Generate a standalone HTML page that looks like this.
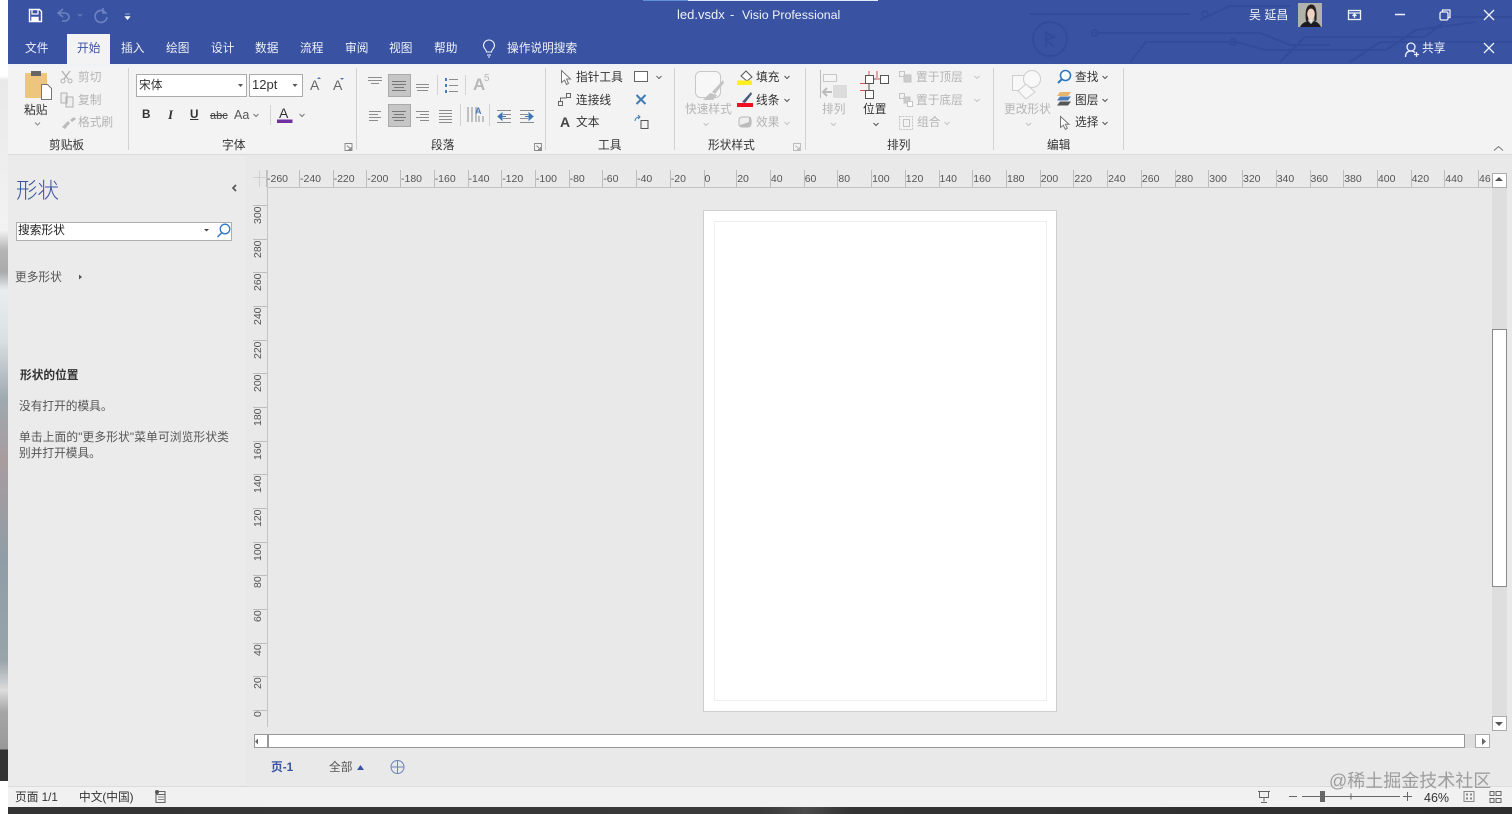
<!DOCTYPE html>
<html lang="zh"><head><meta charset="utf-8"><title>led.vsdx - Visio Professional</title>
<style>
html,body{margin:0;padding:0;width:1512px;height:814px;overflow:hidden;background:#ebebeb}
body{position:relative;font-family:"Liberation Sans","Noto Sans CJK SC",sans-serif;font-size:12px;color:#444;filter:blur(.35px)}
div,span{position:absolute}
.t{line-height:16px;white-space:nowrap;font-size:11.7px;margin-top:1px}
.w{color:#f0f2fa}.g{color:#b4b4b4}.d{color:#333}
.r{top:170px;height:17px;border-left:1px solid #bdbdbd;padding-left:0;font-size:10.5px;line-height:18px;color:#555;font-family:"Liberation Sans",sans-serif;white-space:nowrap}
.v{left:252px;width:13px;height:22px;writing-mode:vertical-rl;transform:rotate(180deg);text-align:right;font-size:10.5px;line-height:13px;color:#555;font-family:"Liberation Sans",sans-serif}
.h{left:253px;width:14px;height:1px;background:#bdbdbd}
svg{position:absolute;left:0;top:0}
</style></head><body>
<!-- left strip -->
<div style="left:0;top:0;width:8px;height:814px;background:linear-gradient(180deg,#fff 0,#fff 76px,#e9e9e9 80px,#f2f2f2 230px,#b5b5b5 250px,#aaa 272px,#e8eef0 290px,#d9e0e3 340px,#9ea9b0 400px,#a89c9e 460px,#8f9da6 560px,#98a4aa 660px,#dcdcdc 690px,#a5a5a5 712px,#999 749px,#333 750px,#333 781px,#fff 781px)"></div>
<!-- title bar -->
<div style="left:8px;top:0;width:1504px;height:64px;background:#3953a2"></div>
<div style="left:643px;top:0;width:45px;height:1px;background:#5f8fd8"></div>
<div style="left:688px;top:0;width:190px;height:1px;background:#e4e9f5"></div>
<!-- ribbon -->
<div style="left:8px;top:64px;width:1504px;height:90px;background:linear-gradient(180deg,#edf2f8 0,#f3f3f3 4px)"></div>
<div style="left:8px;top:154px;width:1504px;height:1px;background:#dcdcdc"></div>
<div style="left:67px;top:34px;width:43px;height:30px;background:#f3f3f3"></div>
<!-- canvas -->
<div style="left:8px;top:155px;width:1504px;height:632px;background:#e9e9e9"></div>
<div style="left:8px;top:155px;width:237px;height:632px;background:#ebebeb"></div>
<!-- page -->
<div style="left:703px;top:210px;width:352px;height:500px;background:#fff;border:1px solid #cfcfcf"></div>
<div style="left:714px;top:221px;width:331px;height:478px;background:#fff;border:1px solid #eeeeee"></div>
<!-- status -->
<div style="left:8px;top:786px;width:1504px;height:1px;background:#dcdcdc"></div>
<div style="left:8px;top:787px;width:1504px;height:20px;background:#f1f1f1"></div>
<div style="left:8px;top:807px;width:1504px;height:7px;background:linear-gradient(90deg,#333 0,#3a3a3a 50%,#4a4a4a 53%,#333 56%,#2e2e2e 100%)"></div>

<!-- ruler -->
<div style="left:268px;top:187px;width:1224px;height:1px;background:#c4c4c4"></div>
<div style="left:267px;top:170px;width:1px;height:557px;background:#c4c4c4"></div>
<span class="r" style="left:266px">-260</span><span class="r" style="left:299px">-240</span><span class="r" style="left:332.6px">-220</span><span class="r" style="left:366.3px">-200</span><span class="r" style="left:400px">-180</span><span class="r" style="left:433.7px">-160</span><span class="r" style="left:467.5px">-140</span><span class="r" style="left:501.2px">-120</span><span class="r" style="left:534.9px">-100</span><span class="r" style="left:568.6px">-80</span><span class="r" style="left:602.3px">-60</span><span class="r" style="left:636.1px">-40</span><span class="r" style="left:669.8px">-20</span><span class="r" style="left:703.5px">0</span><span class="r" style="left:736.2px">20</span><span class="r" style="left:769.9px">40</span><span class="r" style="left:803.7px">60</span><span class="r" style="left:837.4px">80</span><span class="r" style="left:871.1px">100</span><span class="r" style="left:904.8px">120</span><span class="r" style="left:938.5px">140</span><span class="r" style="left:972.3px">160</span><span class="r" style="left:1006px">180</span><span class="r" style="left:1039.7px">200</span><span class="r" style="left:1073.4px">220</span><span class="r" style="left:1107.1px">240</span><span class="r" style="left:1140.9px">260</span><span class="r" style="left:1174.6px">280</span><span class="r" style="left:1208.3px">300</span><span class="r" style="left:1242px">320</span><span class="r" style="left:1275.7px">340</span><span class="r" style="left:1309.5px">360</span><span class="r" style="left:1343.2px">380</span><span class="r" style="left:1376.9px">400</span><span class="r" style="left:1410.6px">420</span><span class="r" style="left:1444.3px">440</span><span class="r" style="left:1478px">46</span>

<div class="h" style="top:710px"></div><span class="v" style="top:711px">0</span>
<div class="h" style="top:676px"></div><span class="v" style="top:677px">20</span>
<div class="h" style="top:643px"></div><span class="v" style="top:644px">40</span>
<div class="h" style="top:609px"></div><span class="v" style="top:610px">60</span>
<div class="h" style="top:575px"></div><span class="v" style="top:576px">80</span>
<div class="h" style="top:542px"></div><span class="v" style="top:543px">100</span>
<div class="h" style="top:508px"></div><span class="v" style="top:509px">120</span>
<div class="h" style="top:474px"></div><span class="v" style="top:475px">140</span>
<div class="h" style="top:441px"></div><span class="v" style="top:442px">160</span>
<div class="h" style="top:407px"></div><span class="v" style="top:408px">180</span>
<div class="h" style="top:373px"></div><span class="v" style="top:374px">200</span>
<div class="h" style="top:340px"></div><span class="v" style="top:341px">220</span>
<div class="h" style="top:306px"></div><span class="v" style="top:307px">240</span>
<div class="h" style="top:272px"></div><span class="v" style="top:273px">260</span>
<div class="h" style="top:239px"></div><span class="v" style="top:240px">280</span>
<div class="h" style="top:205px"></div><span class="v" style="top:206px">300</span>

<!-- scrollbars -->
<div style="left:1492px;top:187px;width:15px;height:530px;background:#dedede"></div>
<div style="left:1492px;top:329px;width:13px;height:256px;background:#fff;border:1px solid #8a8a8a"></div>
<div style="left:1492px;top:173px;width:13px;height:13px;background:#fff;border:1px solid #aaa"></div>
<div style="left:1492px;top:716px;width:13px;height:13px;background:#fff;border:1px solid #aaa"></div>
<div style="left:254px;top:734px;width:1222px;height:14px;background:#dedede"></div>
<div style="left:268px;top:734px;width:1195px;height:12px;background:#fff;border:1px solid #999"></div>
<div style="left:254px;top:734px;width:12px;height:12px;background:#fff;border:1px solid #999"></div>
<div style="left:1475px;top:734px;width:13px;height:12px;background:#fff;border:1px solid #aaa"></div>

<!-- font boxes -->
<div style="left:136px;top:74px;width:109px;height:21px;background:#fff;border:1px solid #ababab"></div>
<div style="left:249px;top:74px;width:52px;height:21px;background:#fff;border:1px solid #ababab"></div>
<div style="left:388px;top:74px;width:21px;height:21px;background:#c6c6c6;border:1px solid #aaa"></div>
<div style="left:388px;top:104px;width:21px;height:21px;background:#c6c6c6;border:1px solid #aaa"></div>
<div style="left:16px;top:222px;width:214px;height:17px;background:#fff;border:1px solid #aeaeae"></div>

<svg width="1512" height="814" viewBox="0 0 1512 814" fill="none">
<!-- circuit decoration -->
<g stroke="#304a97" stroke-width="2" opacity=".75" fill="none">
<circle cx="1050" cy="39" r="17"/><path d="M1046 31v16M1046 33l8 4-8 3 9 7"/>
<path d="M1030 14H1190M1095 33H1260l30 12h40M1130 62l16-20h90l30 8h120l30-20 60-8M1280 62l25-25h120l25-20h62M1200 20l30-14h60M1350 62l30-20h132"/>
<circle cx="1205" cy="14" r="3"/><circle cx="1233" cy="42" r="3"/><circle cx="1095" cy="33" r="3"/>
</g>
<!-- QAT -->
<g stroke="#fff" stroke-width="1.4"><path d="M29.5 9.5h10l2 2v10h-12z"/><path d="M32 10v4h6v-4" stroke-width="1.2"/><path d="M32 21.500v-4h6v4" fill="#fff"/></g>
<g stroke="#6d82c0" stroke-width="1.6"><path d="M63 9l-5 4 5 4"/><path d="M58 13h7a4 4 0 0 1 0 8h-3"/><path d="M78 14l2 2 2-2" stroke-width="1"/><path d="M105 12a6 6 0 1 0 2 5" /><path d="M103 8v5h4" /></g>
<path d="M125 14h5M125 16.500h5l-2.500 3z" fill="#fff" stroke="#fff" stroke-width=".6"/>
<!-- window controls -->
<g stroke="#eef1fa" stroke-width="1.3"><rect x="1348.500" y="10.500" width="12" height="9"/><path d="M1348.500 13h12M1354.500 18v-4M1352.500 16l2-2 2 2"/>
<path d="M1395 14.500h10" stroke-width="1.500"/>
<rect x="1440" y="12" width="8" height="8" rx="1.500"/><path d="M1442.500 12v-2h7.500v7.500h-2"/>
<path d="M1484 10l10 10M1494 10l-10 10M1484 43l10 10M1494 43l-10 10"/>
<circle cx="1411" cy="47" r="4"/><path d="M1405.500 57c0-4 2-6 5.500-6 1.500 0 3 .5 4 1.500M1414 54.500h5M1416.500 52v5"/>
<path d="M486.500 52c0-2.500-3-3.500-3-6.500a5.500 5.500 0 0 1 11 0c0 3-3 4-3 6.500zM487 55h4M488 57h2" stroke-width="1.100"/></g>
<!-- avatar -->
<rect x="1298" y="3" width="24" height="24" fill="#b2b2ac"/>
<path d="M1306 21c-1-7-.5-16 5-16.500s6 8 5.500 16l-2 1-.5-11h-5l-1 11z" fill="#2a201b"/>
<ellipse cx="1311" cy="14" rx="3.800" ry="5.500" fill="#eed3c4"/>
<path d="M1300 27c2-4 5-5 8-6l3 3 3-3c3 1 5 2 7 6z" fill="#1c1c20"/><path d="M1309 19.500h4l-2 4.500z" fill="#eee4df"/>
<!-- separators -->
<g stroke="#d2d2d2"><path d="M128.500 68v82M356.500 68v82M545.500 68v82M674.500 68v82M805.500 68v82M993.500 68v82M1123.500 68v82M270.500 105v20M437.500 75v20M465.500 75v20M460.500 104v22M489.500 104v22"/></g>
<!-- clipboard -->
<rect x="25" y="73" width="22" height="25" rx="1" fill="#eec57f"/><rect x="31" y="71" width="10" height="5" fill="#666"/><path d="M41.500 84.500h6l4 4v11h-10z" fill="#fff" stroke="#777"/>
<g stroke="#b2b2b2" fill="none"><circle cx="63" cy="81" r="2"/><circle cx="70" cy="81" r="2"/><path d="M62 71l6 8M70 71l-6 8" stroke-width="1.300"/>
<path d="M61 93h6v10h-6zM66 97h7v10h-7z" fill="#eee"/></g><path d="M62 127l6-6 2 2-5 6zM70 120l4-3 2 2-4 3z" fill="#bbb"/>
<path d="M35 122.500l2.500 2.500 2.500-2.500" stroke="#888"/>
<!-- font carets -->
<path d="M238 84h5l-2.500 3zM292.500 84h5l-2.500 3z" fill="#555"/>
<path d="M319 77l2 2h-4zM342 80l-2-2h4z" fill="#4a78b4"/>
<path d="M253.500 114l2.500 2.500 2.500-2.500M299.500 114l2.500 2.500 2.500-2.500" stroke="#777"/>
<rect x="277" y="119.500" width="15.500" height="3.500" fill="#7030a0"/>
<path d="M345 143.500h7v7h-7zM347 145.500l4 4M351 147v2.500h-2.500" stroke="#888" stroke-width=".9"/>
<path d="M534.500 143.500h7v7h-7zM536.500 145.500l4 4M540.500 147v2.500h-2.500" stroke="#888" stroke-width=".9"/>
<path d="M793.500 143.500h7v7h-7zM795.500 145.500l4 4M799.500 147v2.500h-2.500" stroke="#bbb" stroke-width=".9"/>
<!-- para icons -->
<g stroke="#8c8c8c"><path d="M368 77.500h14M368 80.500h14M371 83.500h8"/><path d="M392 81.500h14M392 84.500h14M394 87.500h10M392 90.500h14" stroke="#777"/><path d="M416 84.500h13M416 87.500h13M417 90.500h11"/>
<path d="M369 111.500h12M369 114.500h9M369 117.500h12M369 120.500h9"/><path d="M392 111.500h14M394 114.500h10M392 117.500h14M394 120.500h10" stroke="#777"/><path d="M416 111.500h13M420 114.500h9M416 117.500h13M420 120.500h9"/><path d="M439 110.500h13M439 113.500h13M439 116.500h13M439 119.500h13M439 122.500h13"/>
<path d="M449 79.500h9M449 85.500h9M449 91.500h9"/><path d="M468 107v15M472 107v15M476 107v15M479 116v6M483 116v6"/><path d="M497 110.500h14M497 122.500h14M503 114.500h8M503 118.500h8M520 110.500h14M520 122.500h14M520 114.500h8M520 118.500h8"/></g>
<path d="M445 78h2v3h-2zM445 84h2v3h-2zM445 90h2v3h-2z" fill="#4a7ab8"/>
<path d="M502 113l-4 3.500 4 3.500zM502 116.500h4M529 113l4 3.500-4 3.500zM525 116.500h4" fill="#3d74b4" stroke="#3d74b4"/>
<!-- tools icons -->
<path d="M561.500 70.500v12l3-2.500 2 4.500 2-1-2-4.500h4z" fill="#fff" stroke="#777"/>
<path d="M558.500 101.500h4v4h-4zM566.500 93.500h4v4h-4zM560.500 101v-3h6" stroke="#666"/>
<rect x="634.500" y="71.500" width="13" height="10" fill="#fff" stroke="#666"/>
<path d="M656.500 76l2.500 2.500 2.500-2.500" stroke="#666"/>
<path d="M636.500 95l9 9M645.500 95l-9 9" stroke="#3e7ab8" stroke-width="2"/>
<path d="M641 120.500h7v8h-7z" stroke="#555"/><path d="M635 121a4 4 0 0 1 4-4M638 115l2 2-2 2" stroke="#3e7ab8"/>
<!-- quick style -->
<rect x="695.500" y="71.500" width="25" height="26" rx="5" fill="#f7f7f7" stroke="#c8c8c8"/><path d="M703 100l7-7 7 2-4 5zM712 92l11-12 1 3-9 11z" fill="#c4c4c4"/>
<path d="M703.500 123l2.500 2.500 2.500-2.500M1026 123l2.500 2.500 2.500-2.500M831 123l2.500 2.500 2.500-2.500" stroke="#c4c4c4"/>
<path d="M784.500 76l2.500 2.500 2.500-2.500M784.500 99l2.500 2.500 2.500-2.500M1102.500 76l2.500 2.500 2.500-2.500M1102.500 99l2.500 2.500 2.500-2.500M1102.500 122l2.500 2.500 2.500-2.500M873.500 123l2.500 2.500 2.500-2.500" stroke="#555"/>
<path d="M784.500 122l2.500 2.500 2.500-2.500M974.500 76l2.500 2.500 2.500-2.500M974.500 99l2.500 2.500 2.500-2.500M944.500 122l2.500 2.500 2.500-2.500" stroke="#c4c4c4"/>
<path d="M741 76l5-5 6 6-5 4z" fill="#fff" stroke="#555"/><rect x="737" y="80.500" width="15" height="4.500" fill="#ffee22"/>
<path d="M742 102l9-10 1 2-7 9z" fill="#4a5a78"/><rect x="737" y="103" width="16" height="4" fill="#ee1122"/>
<rect x="739" y="117" width="12" height="10" rx="3" fill="#eee" stroke="#b5b5b5"/><path d="M740 125l9-3v-5h2v7l-3 3h-7z" fill="#bbb"/>
<!-- arrange -->
<path d="M820.500 70v28" stroke="#bbb"/><rect x="823.500" y="74.500" width="13" height="7" fill="#f5f5f5" stroke="#c6c6c6"/><rect x="833" y="85" width="14" height="13" fill="#dcdcdc"/><path d="M823 92h9M827 88l-4 4 4 4" stroke="#bbb" stroke-width="2"/>
<g stroke="#555"><rect x="865.500" y="75.500" width="8" height="8" fill="#fff"/><rect x="880.500" y="75.500" width="8" height="8" fill="#fff"/><rect x="865.500" y="90.500" width="8" height="8" fill="#fff"/><path d="M873.500 79h7M869 83.500v7"/></g>
<path d="M869 71v4M860 83.500h5M877 71v7M860 90.500h5M876 79h4" stroke="#e05050"/>
<g stroke="#c4c4c4"><path d="M899.500 71.500h5v5h-5zM899.500 93.500h5v5h-5z"/><rect x="904" y="75" width="7" height="7" fill="#ccc"/><rect x="904" y="97" width="6" height="6" fill="#ccc"/><rect x="907.500" y="101.500" width="5" height="5" fill="#fff"/><path d="M899.500 116.500h13v13h-13z" stroke-dasharray="2 1"/><rect x="903.500" y="119.500" width="6" height="7"/></g>
<!-- edit -->
<g stroke="#cdcdcd" fill="#f8f8f8"><rect x="1012.500" y="75.500" width="15" height="15"/><circle cx="1032" cy="79" r="8.500"/><path d="M1026 84l9 8-9 7-8-8z"/></g>
<circle cx="1065.500" cy="75.500" r="5" stroke="#2f78bc" stroke-width="1.600" fill="#fff"/><path d="M1062 79l-4 4" stroke="#2f78bc" stroke-width="2"/>
<path d="M1060 92h11l-3 4h-11z" fill="#e7b56e"/><path d="M1060 96.500h11l-3 4h-11z" fill="#4a7ab8"/><path d="M1060 101.500h11l-3 4h-11z" fill="#555"/>
<path d="M1060.500 116.500v11l2.800-2.200 2 4 2-1-2-4h3.700z" fill="#fff" stroke="#777"/>
<path d="M1494 150.500l4.500-4 4.500 4" stroke="#777"/>
<!-- panel -->
<path d="M236 185l-3 3 3 3" stroke="#555" stroke-width="1.700"/><path d="M204 229h5l-2.500 2.500z" fill="#444"/>
<circle cx="225" cy="229" r="4.800" stroke="#2f78bc" stroke-width="1.300" fill="#fff"/><path d="M221.500 233l-4 4" stroke="#2f78bc" stroke-width="1.500"/>
<path d="M79 274.500l3 2.500-3 2.500z" fill="#555"/>
<!-- ruler corner -->
<path d="M253 177.500h14M259.500 170v17" stroke="#d0d0d0"/>
<path d="M1499 177l-4 4h8zM1499 726l-4-4h8z" fill="#555"/>
<path d="M258 738.500l-3 3 3 3zM1482 738l4 3.500-4 3.500z" fill="#666"/>
<!-- tabs -->
<path d="M357 770l3.500-5 3.500 5z" fill="#3953a2"/>
<circle cx="397.500" cy="767" r="6.500" stroke="#6d82c0"/><path d="M391 767h13M397.500 760.500v13" stroke="#6d82c0"/>
<!-- status icons -->
<path d="M156 791.500h9v11h-9zM156 794.500h9" stroke="#666" stroke-width="1.100"/><circle cx="157" cy="792" r="2" fill="#555"/><path d="M158 797h6M158 799.500h6" stroke="#888"/>
<path d="M1258 791.500h12M1259.500 791.500v6h9v-6M1264 797.500v4M1261 802.500h6" stroke="#666"/>
<path d="M1289 796.500h8M1302 796.500h98M1403 796.500h9M1407.500 792v9M1351 793.500v6" stroke="#666"/><rect x="1320" y="791" width="5" height="11" fill="#666"/>
<path d="M1464 791.500h10v10h-10z" stroke="#888"/><path d="M1466 793.500h2v2h-2zM1470 793.500h2v2h-2zM1466 797.500h2v2h-2zM1470 797.500h2v2h-2z" fill="#888"/>
<path d="M1490 791.500h4v4h-4zM1496 791.500h5v4h-5zM1490 798.500h4v4h-4zM1496 798.500h5v4h-5z" stroke="#666"/>
</svg>

<!-- title text -->
<span class="t w" style="left:677px;top:5.5px;font-size:13px">led.vsdx</span>
<span class="t w" style="left:730px;top:5.5px;font-size:13px">-</span>
<span class="t w" style="left:742px;top:5.5px;font-size:12.4px">Visio Professional</span>
<span class="t w" style="left:1249px;top:5.5px;font-size:12px">吴 延昌</span>
<span class="t w" style="left:25px;top:39.5px">文件</span>
<span class="t" style="left:77px;top:39.5px;color:#3953a2">开始</span>
<span class="t w" style="left:121px;top:39.5px">插入</span>
<span class="t w" style="left:166px;top:39.5px">绘图</span>
<span class="t w" style="left:211px;top:39.5px">设计</span>
<span class="t w" style="left:255px;top:39.5px">数据</span>
<span class="t w" style="left:300px;top:39.5px">流程</span>
<span class="t w" style="left:345px;top:39.5px">审阅</span>
<span class="t w" style="left:389px;top:39.5px">视图</span>
<span class="t w" style="left:434px;top:39.5px">帮助</span>
<span class="t w" style="left:507px;top:40px">操作说明搜索</span>
<span class="t w" style="left:1422px;top:40px">共享</span>

<!-- ribbon text -->
<span class="t g" style="left:78px;top:69px">剪切</span>
<span class="t g" style="left:78px;top:92px">复制</span>
<span class="t g" style="left:78px;top:114px">格式刷</span>
<span class="t d" style="left:24px;top:101.500px">粘贴</span>
<span class="t d" style="left:49px;top:137px">剪贴板</span>
<span class="t d" style="left:139px;top:77px">宋体</span>
<span class="t d" style="left:252px;top:76px;font-size:13px">12pt</span>
<span class="t" style="left:310px;top:76px;font-size:14px;color:#666">A</span>
<span class="t" style="left:333px;top:76px;font-size:14px;color:#666">A</span>
<span class="t d" style="left:142px;top:106px;font-weight:bold">B</span>
<span class="t d" style="left:168px;top:106px;font-style:italic;font-family:'Liberation Serif',serif;font-weight:bold;font-size:13px">I</span>
<span class="t d" style="left:190px;top:106px;text-decoration:underline;font-weight:bold">U</span>
<span class="t" style="left:210px;top:107px;font-size:11px;text-decoration:line-through;color:#444">abc</span>
<span class="t" style="left:234px;top:106px;color:#555;font-size:12.500px">Aa</span>
<span class="t d" style="left:279px;top:104px;font-size:14px">A</span>
<span class="t d" style="left:222px;top:137px">字体</span>
<span class="t" style="left:473px;top:76px;font-size:17px;font-weight:bold;color:#b8b8b8">A</span>
<span class="t" style="left:484px;top:70px;font-size:10px;color:#b8b8b8">5</span>
<span class="t" style="left:475px;top:102px;font-size:9px;font-weight:bold;color:#4a7ab8">A</span>
<span class="t d" style="left:431px;top:137px">段落</span>
<span class="t d" style="left:576px;top:69px">指针工具</span>
<span class="t d" style="left:576px;top:92px">连接线</span>
<span class="t d" style="left:560px;top:113px;font-size:14px;font-weight:bold;color:#444">A</span>
<span class="t d" style="left:576px;top:114px">文本</span>
<span class="t d" style="left:598px;top:137px">工具</span>
<span class="t g" style="left:685px;top:101px">快速样式</span>
<span class="t d" style="left:756px;top:69px">填充</span>
<span class="t d" style="left:756px;top:92px">线条</span>
<span class="t g" style="left:756px;top:114px">效果</span>
<span class="t d" style="left:708px;top:137px">形状样式</span>
<span class="t g" style="left:822px;top:101px">排列</span>
<span class="t d" style="left:863px;top:101px">位置</span>
<span class="t g" style="left:916px;top:69px">置于顶层</span>
<span class="t g" style="left:916px;top:92px">置于底层</span>
<span class="t g" style="left:917px;top:114px">组合</span>
<span class="t d" style="left:887px;top:137px">排列</span>
<span class="t g" style="left:1004px;top:101px">更改形状</span>
<span class="t d" style="left:1075px;top:69px">查找</span>
<span class="t d" style="left:1075px;top:92px">图层</span>
<span class="t d" style="left:1075px;top:114px">选择</span>
<span class="t d" style="left:1047px;top:137px">编辑</span>

<!-- panel text -->
<span class="t" style="left:16px;top:177px;font-size:21.500px;line-height:26px;color:#3953a2;font-weight:300">形状</span>
<span class="t" style="left:18px;top:222px;color:#222">搜索形状</span>
<span class="t" style="left:15px;top:269px;color:#555">更多形状</span>
<span class="t d" style="left:20px;top:367px;font-weight:bold">形状的位置</span>
<span class="t" style="left:19px;top:398px;color:#555">没有打开的模具。</span>
<span class="t" style="left:19px;top:429px;color:#555;letter-spacing:.16px">单击上面的"更多形状"菜单可浏览形状类</span>
<span class="t" style="left:19px;top:445px;color:#555">别并打开模具。</span>

<!-- tabs/status text -->
<span class="t" style="left:271px;top:759px;color:#3953a2;font-weight:bold">页-1</span>
<span class="t" style="left:329px;top:759px;color:#555">全部</span>
<span class="t d" style="left:15px;top:789px">页面 1/1</span>
<span class="t d" style="left:79px;top:789px">中文(中国)</span>
<span class="t d" style="left:1424px;top:789px;font-size:12.500px">46%</span>
<span class="t" style="left:1329px;top:770px;font-size:18px;line-height:20px;color:rgba(110,110,110,.62)">@稀土掘金技术社区</span>
</body></html>
